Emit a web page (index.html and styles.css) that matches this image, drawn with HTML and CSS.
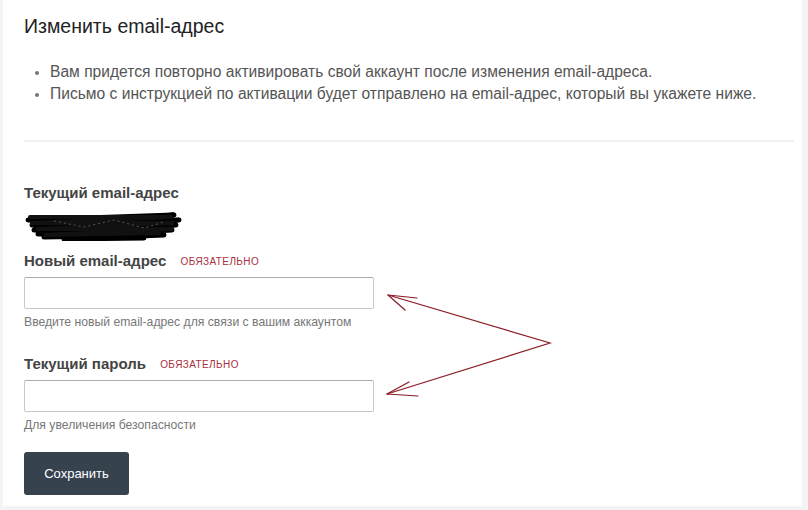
FILE: index.html
```html
<!DOCTYPE html>
<html lang="ru">
<head>
<meta charset="utf-8">
<title>Изменить email-адрес</title>
<link rel="stylesheet" href="styles.css">
</head>
<body>
<div class="card">
  <h2 class="title">Изменить email-адрес</h2>
  <ul class="notes">
    <li>Вам придется повторно активировать свой аккаунт после изменения email-адреса.</li>
    <li>Письмо с инструкцией по активации будет отправлено на email-адрес, который вы укажете ниже.</li>
  </ul>
  <hr class="divider">
  <form class="form">
    <div class="label">Текущий email-адрес</div>
    <svg class="scribble" width="160" height="30" viewBox="0 0 160 30">
      <path d="M4 9 L150 4 L8 14 L155 9 L10 19 L152 14 L14 23 L148 19 L20 26 L140 24 L40 28 L120 27" fill="none" stroke="#000" stroke-width="5" stroke-linejoin="round" stroke-linecap="round"/>
      <path d="M6 6 L148 6 L6 12 L150 12 L12 18 L150 18 L20 24 L135 22" fill="none" stroke="#111" stroke-width="4" stroke-linecap="round"/>
      <path d="M30 10 L60 16 L90 9 L120 17 L140 11" fill="none" stroke="#555" stroke-width="1" stroke-dasharray="2 3"/>
    </svg>
    <div class="label">Новый email-адрес <span class="req">ОБЯЗАТЕЛЬНО</span></div>
    <input class="field" type="email">
    <div class="help">Введите новый email-адрес для связи с вашим аккаунтом</div>
    <div class="label label-gap">Текущий пароль <span class="req">ОБЯЗАТЕЛЬНО</span></div>
    <input class="field" type="password">
    <div class="help">Для увеличения безопасности</div>
    <button class="save" type="button">Сохранить</button>
  </form>
  <svg class="arrows" width="808" height="510" viewBox="0 0 808 510">
    <g fill="none" stroke="#8b1a24" stroke-width="1.2" stroke-linecap="round">
      <path d="M388 295 L550 343 L387 394"/>
      <path d="M388 295 L417 298 M388 295 L405 310"/>
      <path d="M387 394 L418 396 M387 394 L409 382"/>
    </g>
  </svg>
</div>
</body>
</html>
```

FILE: styles.css
```css
html, body {
  margin: 0;
  padding: 0;
}
body {
  background: #f4f4f4;
  font-family: "Liberation Sans", Arial, sans-serif;
  color: #333;
}
.card {
  position: relative;
  background: #fff;
  margin: 0 6px 0 3px;
  height: 506px;
  padding: 14px 0 0 21px;
  box-sizing: border-box;
}
.title {
  margin: 0;
  font-size: 19.5px;
  line-height: 24px;
  font-weight: normal;
  color: #222;
}
.notes {
  margin: 23px 0 0 0;
  padding: 0 0 0 26px;
  font-size: 15.6px;
  line-height: 22px;
  color: #555;
}
.notes li::marker {
  color: #777;
  font-size: 13px;
}
.divider {
  margin: 35px 8px 0 0;
  border: 0;
  border-top: 2px solid #f0f0f0;
  height: 0;
}
.form {
  display: flex;
  flex-direction: column;
  align-items: flex-start;
  margin-top: 41px;
}
.label {
  font-size: 15px;
  line-height: 20px;
  font-weight: bold;
  color: #444;
}
.label-gap {
  margin-top: 24px;
}
.req {
  font-size: 10px;
  font-weight: normal;
  color: #a8303c;
  letter-spacing: 0.4px;
  margin-left: 10px;
  vertical-align: 1px;
}
.scribble {
  display: block;
  margin: 8px 0 10px 0;
}
.field {
  margin-top: 5px;
  width: 350px;
  height: 32px;
  box-sizing: border-box;
  border: 1px solid #c8c8c8;
  border-top-color: #aaa;
  border-radius: 2px;
  background: #fff;
}
.help {
  margin-top: 5px;
  font-size: 12.2px;
  line-height: 16px;
  color: #777;
}
.save {
  margin-top: 19px;
  width: 105px;
  height: 43px;
  border: 0;
  border-radius: 3px;
  background: #36434f;
  color: #fff;
  font-family: "Liberation Sans", Arial, sans-serif;
  font-size: 13px;
  cursor: pointer;
}
.arrows {
  position: absolute;
  left: -3px;
  top: 0;
  pointer-events: none;
}
```
